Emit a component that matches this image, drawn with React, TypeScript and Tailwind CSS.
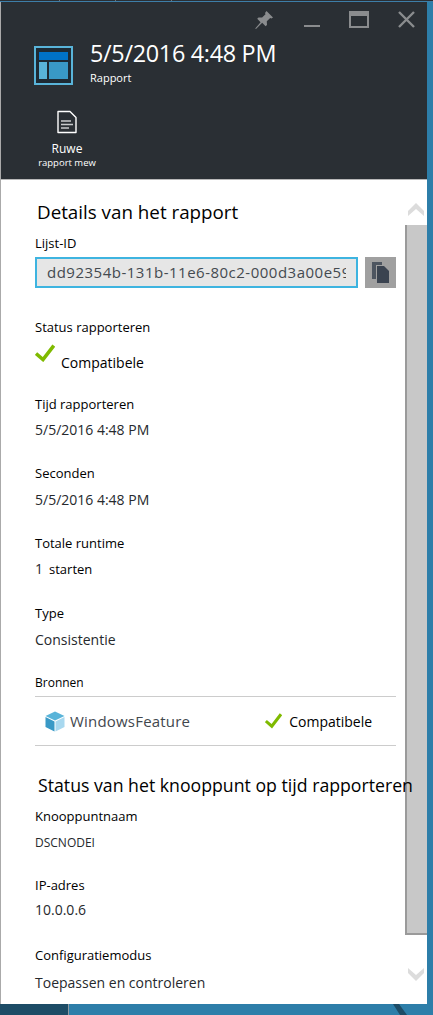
function Field({ label, value, className, gap }: { label: string; value: string; className: string; gap: string }) {
  return (
    <div className={className}>
      <div className="text-[13px] leading-[18px] text-black">{label}</div>
      <div className={`${gap} text-[14px] leading-[20px] text-[#26292d]`}>{value}</div>
    </div>
  );
}

function GreenCheck({ width }: { width: number }) {
  return (
    <svg width={width} viewBox="0 0 20 18" fill="none" stroke="#7fba00" strokeWidth="3.6">
      <path d="M1 9.500 8 15.500 18.800 1.500" />
    </svg>
  );
}

export default function App() {
  return (
    <div className="relative flex h-[1015px] w-[433px] flex-col overflow-hidden bg-[#2d7ea9] font-['Open_Sans',sans-serif]">
      {/* window strip */}
      <div className="flex h-px shrink-0 bg-[#2a2f34]">
        <div className="h-px w-[60px] border-r border-[#6d7479]" />
        <div className="h-px w-[56px] border-r border-[#6d7479]" />
        <div className="h-px w-[56px] border-r border-[#6d7479]" />
      </div>
      <div className="h-px shrink-0 bg-[#3d7ea8]" />

      <div className="flex h-[1002px] w-[427px] shrink-0 flex-col border-l border-[#aaaaaa] bg-white">
        {/* Header */}
        <div className="h-[177px] shrink-0 bg-[#2a2f34] text-white">
          <div className="flex items-start justify-end pt-[8px] pr-[12px] text-[#8a8c8e]">
            <svg width="20" height="20" viewBox="0 0 20 20" className="mr-[30px]" fill="currentColor">
              <path d="M12.500 1 19 7.500l-1.600 1-1.200-.6-3.400 3.400.2 3.600-1.400 1.300-3.400-3.400L2 19l-.8-.4 5.400-6.400L3.200 8.800l1.300-1.400 3.600.2 3.400-3.400-.5-1.200z" />
            </svg>
            <div className="mt-[15px] mr-[29px] h-[2px] w-[16px] bg-current" />
            <div className="mt-[1px] mr-[29px] h-[17px] w-[20px] border-2 border-t-[5px] border-current" />
            <svg width="17" height="17" viewBox="0 0 17 17" className="mt-[1px]" stroke="currentColor" strokeWidth="2.400">
              <path d="M1 1 16 16M16 1 1 16" />
            </svg>
          </div>

          <div className="mt-[6px] flex pl-[33px]">
            <svg width="39" height="39" viewBox="0 0 39 39" className="mt-[10px]">
              <rect x="0" y="0" width="39" height="39" fill="#59b4d9" />
              <rect x="2" y="2" width="35" height="35" fill="#1e2a33" />
              <rect x="5" y="6" width="29" height="8" fill="#0072c6" />
              <rect x="5" y="16" width="8" height="17" fill="#59b4d9" />
              <rect x="15" y="16" width="19" height="17" fill="#3999c6" />
            </svg>
            <div className="ml-[17px] pt-[1px]">
              <div className="text-[23.400px] leading-[32px] tracking-[-0.3px] whitespace-nowrap">5/5/2016 4:48 PM</div>
              <div className="mt-[1px] text-[11px] leading-[16px]">Rapport</div>
            </div>
          </div>

          <div className="mt-[24px] flex w-[96px] flex-col items-center pl-[36px] text-center">
            <svg width="22" height="24" viewBox="0 0 22 24" fill="none" stroke="white" strokeWidth="1.400">
              <path d="M2 1.500h12l6 6v15H2z" strokeLinejoin="round" />
              <path d="M5 11h10M5 14.500h12M5 18h8" stroke="#c8cacc" />
            </svg>
            <div className="mt-[8px] text-[12px] leading-[14px]">Ruwe</div>
            <div className="text-[9.500px] leading-[13px] whitespace-nowrap">rapport mew</div>
          </div>
        </div>
        <div className="h-px shrink-0 bg-[#b8b8b8]" />

        {/* Body */}
        <div className="relative min-h-0 flex-1 overflow-hidden pr-[31px] pl-[34px]">
          {/* scrollbar sits under the text: the long heading runs over it */}
          <svg width="16" height="13" viewBox="0 0 16 13" className="absolute top-[23px] right-[3px]" fill="#dcdcdc">
            <path d="M8 0 16 8V13L8 6 0 13V8z" />
          </svg>
          <div className="absolute top-[45px] right-0 h-[710px] w-[22px] border-b-2 border-l-2 border-[#9a9a9a] bg-[#c8c8c8]" />
          <svg width="16" height="13" viewBox="0 0 16 13" className="absolute top-[788px] right-[3px]" fill="#dcdcdc">
            <path d="M8 13 16 5V0L8 7 0 0V5z" />
          </svg>

          <div className="relative">
            <h2 className="mt-[20px] pl-[2px] text-[18.800px] leading-[24px] whitespace-nowrap text-black">Details van het rapport</h2>

            <div className="mt-[10px] text-[13px] leading-[18px] text-black">Lijst-ID</div>
            <div className="mt-[5px] flex justify-between">
              <div className="flex h-[31px] w-[323px] items-center border-2 border-[#3eb4e0] bg-[#e6e6e6] pl-[10px] text-[15px] tracking-[0.5px] text-[#444a50]">
                <span className="block w-[299px] shrink-0 overflow-hidden whitespace-nowrap">dd92354b-131b-11e6-80c2-000d3a00e59f</span>
              </div>
              <div className="flex h-[31px] w-[31px] items-center justify-center bg-[#a0a0a0]">
                <svg width="17" height="21" viewBox="0 0 17 21" fill="#3a4350">
                  <path d="M0 0h10v3H4v14H0z" fill="#4d5560" />
                  <path d="M5 4h7l5 5v12H5z" />
                </svg>
              </div>
            </div>

            <div className="mt-[30px] text-[13px] leading-[18px] text-black">Status rapporteren</div>
            <div className="mt-[12px] flex text-[14px] leading-[20px] text-black">
              <span className="mt-[-4px]"><GreenCheck width={20} /></span>
              <span className="mt-[5px] ml-[6px]">Compatibele</span>
            </div>

            <Field className="mt-[22px]" gap="mt-[7px]" label="Tijd rapporteren" value="5/5/2016 4:48 PM" />
            <Field className="mt-[24px]" gap="mt-[8px]" label="Seconden" value="5/5/2016 4:48 PM" />

            <div className="mt-[24px] text-[13px] leading-[18px] text-black">Totale runtime</div>
            <div className="mt-[7px] flex items-baseline text-[14px] leading-[20px] text-[#26292d]">
              <span>1</span>
              <span className="ml-[6px] text-[13px] text-black">starten</span>
            </div>

            <Field className="mt-[25px]" gap="mt-[8px]" label="Type" value="Consistentie" />

            <div className="mt-[25px] text-[12px] leading-[16px] text-black">Bronnen</div>
            <div className="mt-[5px] flex h-[50px] items-center border-y border-[#cccccc]">
              <svg width="20" height="21" viewBox="0 0 20 21" className="ml-[10px]">
                <path d="M10 0.500 19.500 5 10 9.500 0.500 5z" fill="#59b4d9" />
                <path d="M0.500 6 9.500 10.500V20.500L0.500 16z" fill="#3999c6" />
                <path d="M10.500 10.500 19.500 6V16L10.500 20.500z" fill="#a8d8ef" />
              </svg>
              <span className="ml-[5px] text-[15px] tracking-[0.2px] text-[#42474d]">WindowsFeature</span>
              <span className="ml-[75px] flex"><GreenCheck width={17} /></span>
              <span className="ml-[7px] text-[14px] text-black">Compatibele</span>
            </div>

            <h2 className="mt-[27px] pl-[3px] text-[17.700px] leading-[24px] whitespace-nowrap text-black">Status van het knooppunt op tijd rapporteren</h2>

            <div className="mt-[10px] text-[13px] leading-[18px] text-black">Knooppuntnaam</div>
            <div className="mt-[9px] text-[12px] leading-[18px] text-[#26292d]">DSCNODEI</div>
            <Field className="mt-[24px]" gap="mt-[6px]" label="IP-adres" value="10.0.0.6" />
            <div className="mt-[26px] text-[13px] leading-[18px] text-black">Configuratiemodus</div>
            <div className="mt-[9px] text-[14px] leading-[20px] text-[#26292d]">Toepassen en controleren</div>
          </div>
        </div>
      </div>

      {/* taskbar fragment */}
      <div className="flex h-[11px] shrink-0">
        <div className="h-full w-[69px] border-r border-[#8f9ba3] bg-[#1d4c66]" />
      </div>
      {/* right page edge */}
      <svg width="14" height="11" viewBox="0 0 14 11" className="absolute right-[26px] bottom-0">
        <path d="M0 0h6l8 11H7z" fill="#1d4c66" />
      </svg>
    </div>
  );
}
